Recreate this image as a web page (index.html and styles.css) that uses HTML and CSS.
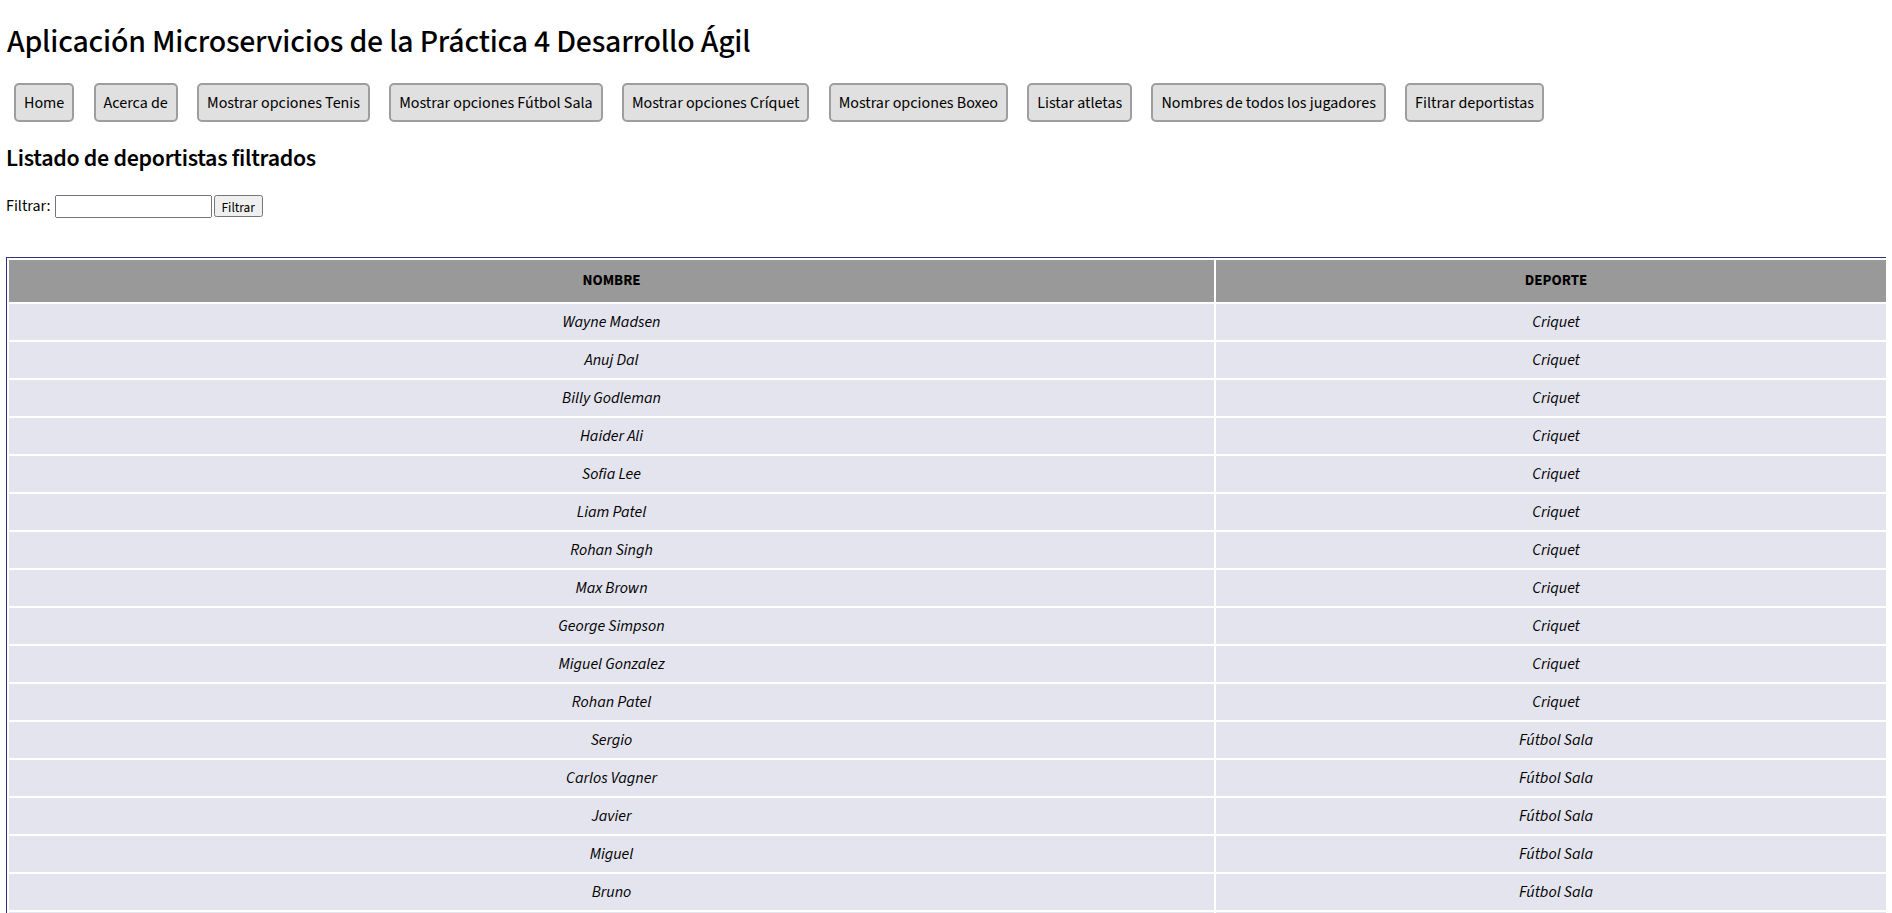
FILE: index.html
```html
<!DOCTYPE html>
<html lang="es">
<head>
<meta charset="utf-8">
<title>Aplicación Microservicios</title>
<link rel="stylesheet" href="styles.css">
</head>
<body>
<h1 class="title">Aplicación Microservicios de la Práctica 4 Desarrollo Ágil</h1>
<nav class="menu">
  <button class="menu-btn">Home</button>
  <button class="menu-btn">Acerca de</button>
  <button class="menu-btn">Mostrar opciones Tenis</button>
  <button class="menu-btn">Mostrar opciones Fútbol Sala</button>
  <button class="menu-btn">Mostrar opciones Críquet</button>
  <button class="menu-btn">Mostrar opciones Boxeo</button>
  <button class="menu-btn">Listar atletas</button>
  <button class="menu-btn">Nombres de todos los jugadores</button>
  <button class="menu-btn">Filtrar deportistas</button>
</nav>
<h2 class="subtitle">Listado de deportistas filtrados</h2>
<form class="filter">
  <label class="filter-label" for="f">Filtrar:</label> <input class="filter-input" id="f" type="text"> <button class="filter-btn" type="button">Filtrar</button>
</form>
<table class="sports">
  <thead>
    <tr><th class="col-name">NOMBRE</th><th>DEPORTE</th></tr>
  </thead>
  <tbody>
    <tr><td>Wayne Madsen</td><td>Criquet</td></tr>
    <tr><td>Anuj Dal</td><td>Criquet</td></tr>
    <tr><td>Billy Godleman</td><td>Criquet</td></tr>
    <tr><td>Haider Ali</td><td>Criquet</td></tr>
    <tr><td>Sofia Lee</td><td>Criquet</td></tr>
    <tr><td>Liam Patel</td><td>Criquet</td></tr>
    <tr><td>Rohan Singh</td><td>Criquet</td></tr>
    <tr><td>Max Brown</td><td>Criquet</td></tr>
    <tr><td>George Simpson</td><td>Criquet</td></tr>
    <tr><td>Miguel Gonzalez</td><td>Criquet</td></tr>
    <tr><td>Rohan Patel</td><td>Criquet</td></tr>
    <tr><td>Sergio</td><td>Fútbol Sala</td></tr>
    <tr><td>Carlos Vagner</td><td>Fútbol Sala</td></tr>
    <tr><td>Javier</td><td>Fútbol Sala</td></tr>
    <tr><td>Miguel</td><td>Fútbol Sala</td></tr>
    <tr><td>Bruno</td><td>Fútbol Sala</td></tr>
    <tr><td>Lucas</td><td>Fútbol Sala</td></tr>
  </tbody>
</table>
</body>
</html>
```
FILE: styles.css
```css
html {
  overflow: hidden;
}
body {
  margin: 0 6px;
  font-family: "Source Sans 3", "Source Sans Pro", "Lato", sans-serif;
  font-size: 16px;
  line-height: 1.257;
  color: #000;
  background: #fff;
}
.title {
  font-size: 32px;
  font-weight: 500;
  letter-spacing: -0.2px;
  line-height: 1.257;
  margin: 0;
  padding: 22px 0 0 1px;
  height: 40px;
  margin-bottom: 21px;
}
.menu {
  display: flex;
  gap: 19.25px;
  padding-left: 8px;
}
.menu-btn {
  font-family: inherit;
  font-size: 16px;
  line-height: 1.257;
  color: #000;
  background: #e0e0e0;
  border: 2px solid #9e9e9e;
  border-radius: 5px;
  padding: 7.5px 8px;
  cursor: pointer;
}
.subtitle {
  font-size: 24px;
  font-weight: 600;
  letter-spacing: -0.3px;
  line-height: 1.257;
  margin: 0;
  padding-top: 21.5px;
  height: 30px;
  margin-bottom: 19px;
}
.filter {
  margin: 0 0 37.5px 0;
  height: 27px;
  display: flex;
  align-items: center;
  gap: 4px;
}
.filter-label {
  font-size: 16px;
  margin-top: -1px;
}
.filter-input {
  box-sizing: border-box;
  width: 157px;
  height: 23px;
  font-family: inherit;
  font-size: 13.33px;
}
.filter-btn {
  font-family: inherit;
  font-size: 13.33px;
  height: 22px;
  padding: 1px 6px;
  margin-left: -2px;
}
.sports {
  width: 1893px;
  border: 1px solid #30307a;
  border-spacing: 2px;
}
.sports th {
  background: #999999;
  font-weight: 700;
  font-size: 15px;
  height: 42px;
  padding: 0;
  box-sizing: border-box;
}
.sports .col-name {
  width: 1205px;
}
.sports td {
  background: #e4e4ee;
  font-style: italic;
  text-align: center;
  font-size: 16px;
  height: 36px;
  padding: 0;
  box-sizing: border-box;
}
```
